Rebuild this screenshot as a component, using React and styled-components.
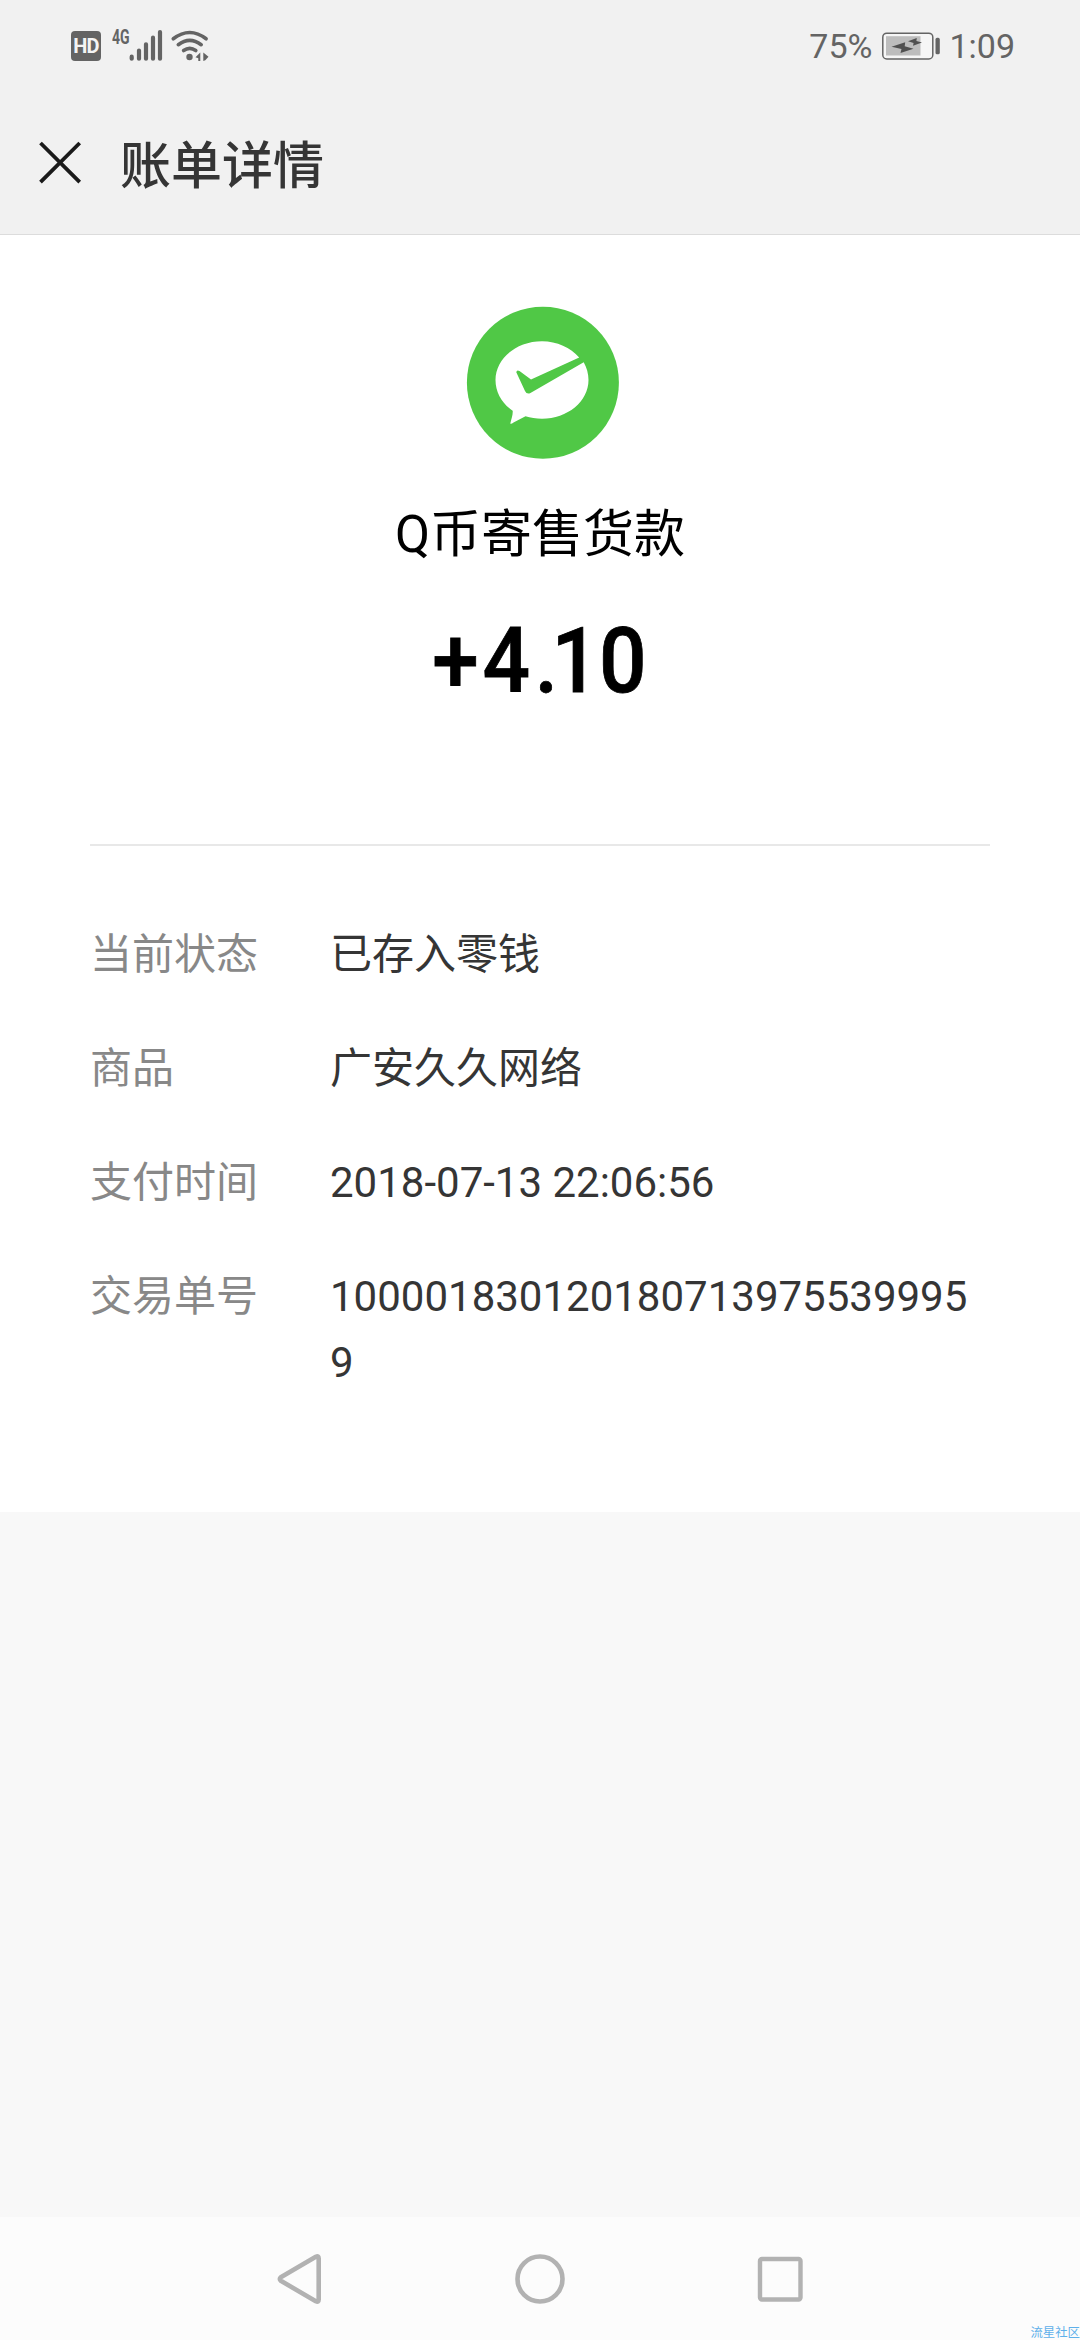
import React from "react";
import styled, { createGlobalStyle } from "styled-components";

const GlobalStyle = createGlobalStyle`
  * { box-sizing: border-box; }
  body {
    margin: 0;
    background: #f8f8f8;
    font-family: Roboto, "Noto Sans CJK SC", sans-serif;
  }
`;

const Screen = styled.div`
  position: relative;
  display: flex;
  flex-direction: column;
  width: 1080px;
  height: 2340px;
  overflow: hidden;
  background: #f8f8f8;
`;

const Header = styled.header`
  flex: none;
  height: 235px;
  background: #f1f1f1;
  border-bottom: 1px solid #dcdcdc;
`;

const StatusBar = styled.div`
  display: flex;
  justify-content: space-between;
  height: 91px;
  padding: 0 65px 0 71px;
  color: #646464;
`;

const StatusGroup = styled.div`
  display: flex;
  align-items: center;
  height: 91px;
`;

const HdBadge = styled.span`
  width: 30px;
  height: 30px;
  border-radius: 4px;
  background: #646464;
  color: #f4f4f4;
  font: 700 20px/30px Roboto, sans-serif;
  letter-spacing: -0.8px;
  text-align: center;
`;

const NetworkLabel = styled.span`
  width: 17px;
  margin: 0 0 17px 11px;
  font: 700 20px/20px Roboto, sans-serif;
  transform: scaleX(0.7);
  transform-origin: left center;
`;

const StatusText = styled.span`
  margin-left: ${(p) => p.$gap || 0}px;
  font-size: 34px;
  line-height: 40px;
  white-space: nowrap;
`;

const Icon = styled.svg`
  display: block;
  flex: none;
  overflow: visible;
  margin-left: ${(p) => p.$gap || 0}px;
`;

const TitleBar = styled.div`
  display: flex;
  align-items: center;
  height: 141px;
  padding-left: 39px;
`;

const Title = styled.h1`
  margin: 0 0 0 39px;
  color: #353535;
  font: 500 51px/72px "Noto Sans CJK SC", sans-serif;
`;

const Bill = styled.main`
  flex: none;
  height: 1277px;
  padding: 71px 90px 0;
  background: #fff;
`;

const Summary = styled.section`
  display: flex;
  flex-direction: column;
  align-items: center;
  height: 540px;
  border-bottom: 2px solid #e8e8e8;
`;

const Merchant = styled.div`
  margin-top: 40px;
  color: #000;
  font-size: 51px;
  line-height: 72px;
`;

const Amount = styled.div`
  margin-top: 40px;
  color: #000;
  font: 500 91px/100px Roboto, sans-serif;
  -webkit-text-stroke: 0.8px #000;
  transform: scaleX(0.92);
`;

const Glyph = styled.span`
  letter-spacing: ${(p) => p.$spacing}px;
`;

const Details = styled.dl`
  display: flex;
  flex-direction: column;
  gap: 48px;
  margin: 76px 0 0;
`;

const DetailRow = styled.div`
  display: grid;
  grid-template-columns: 240px 645px;
  font-size: 42px;
  line-height: 66px;
`;

const Label = styled.dt`
  color: #888;
`;

const Value = styled.dd`
  margin: 0;
  color: #353535;
  overflow-wrap: anywhere;
`;

const NavBar = styled.nav`
  display: flex;
  justify-content: center;
  align-items: center;
  gap: 190px;
  height: 123px;
  margin-top: auto;
  background: #fcfcfc;
`;

const Watermark = styled.span`
  position: absolute;
  right: 0;
  bottom: 0;
  color: #5fb0ea;
  font: 12.4px/14px "Liberation Sans", "Noto Sans CJK SC", sans-serif;
  white-space: nowrap;
`;

const details = [
  ["当前状态", "已存入零钱"],
  ["商品", "广安久久网络"],
  ["支付时间", "2018-07-13 22:06:56"],
  ["交易单号", "1000018301201807139755399959"],
];

const SignalIcon = () => (
  <Icon width="33" height="31" viewBox="128 29.5 33 31" stroke="#646464" strokeWidth="4.2" strokeLinecap="round">
    <path d="M130.7 56.2V58.2M138 50V58.2M145 43.8V58.2M152 37.2V58.2M159 31.5V58.2" />
  </Icon>
);

const WifiIcon = () => (
  <Icon $gap={9} width="38" height="31" viewBox="170 29.5 38 31" fill="none" stroke="#646464" strokeWidth="3.6" strokeLinecap="round">
    <path d="M172.3 38.3Q188.7 25.7 205.1 38.3" />
    <path d="M177.3 44.2Q188.7 35.6 200.2 44.2" />
    <path d="M182.6 50Q188.7 45.6 194.8 50" />
    <circle cx="188.5" cy="56.5" r="3.2" fill="#646464" stroke="none" />
    <path d="M194.5 56.8L199.3 52V60.5H197.3V57.8ZM202.3 52L207.5 56.3L204.3 59.8L202.3 60.5Z" fill="#646464" stroke="none" />
  </Icon>
);

const BatteryIcon = () => (
  <Icon $gap={10} width="58" height="28" viewBox="881 31.5 58 28">
    <rect x="881.8" y="32.7" width="50" height="25.8" rx="4" fill="#f6f6f6" stroke="#646464" strokeWidth="1.5" />
    <rect x="885" y="35.7" width="34.5" height="19.3" fill="#bdbdbd" />
    <rect x="934.5" y="37.3" width="4.3" height="16.5" rx="1.6" fill="#646464" />
    <path d="M890.5 46.2L900.5 48.6L899.5 52.5L912.5 48.2L903.7 45.8L904.2 41.8ZM907 40.8L912.6 42.5L912 45.3L921 42L915.4 40.5L915.8 37.4Z" fill="#505050" />
  </Icon>
);

const CloseIcon = () => (
  <Icon width="42" height="42" viewBox="39 140 42 42" stroke="#1a1a1a" strokeWidth="3.8">
    <path d="M40.5 142L79.7 181.2M79.7 142L40.5 181.2" />
  </Icon>
);

const PayLogo = () => (
  <Icon $gap={5} width="152" height="153" viewBox="466.5 306 152 153">
    <circle cx="542.4" cy="382.7" r="76" fill="#50c846" />
    <path
      d="M541.5 341.2C516 341.2 495 358.5 495 380C495 392.5 501.5 403.5 512.2 410.7C512.5 415 511 418.5 509.8 423.5Q510.5 424.5 513 422.6L525 416.3C530 418 535.5 418.7 541.5 418.7C567 418.7 588 401.5 588 380C588 374 586.3 367.4 583.2 362.2L529.5 393.3Q526 394.4 524.5 391L515.8 372.2Q516.2 369.5 519 371L530.5 379.4L578.7 357.6C570 347.5 556.5 341.2 541.5 341.2Z"
      fill="#fff"
    />
  </Icon>
);

export default function App() {
  return (
    <Screen>
      <GlobalStyle />
      <Header>
        <StatusBar>
          <StatusGroup>
            <HdBadge>HD</HdBadge>
            <NetworkLabel>4G</NetworkLabel>
            <SignalIcon />
            <WifiIcon />
          </StatusGroup>
          <StatusGroup>
            <StatusText>75%</StatusText>
            <BatteryIcon />
            <StatusText $gap={9}>1:09</StatusText>
          </StatusGroup>
        </StatusBar>
        <TitleBar>
          <CloseIcon />
          <Title>账单详情</Title>
        </TitleBar>
      </Header>
      <Bill>
        <Summary>
          <PayLogo />
          <Merchant>Q币寄售货款</Merchant>
          <Amount>
            <Glyph $spacing={4}>+</Glyph>
            <Glyph $spacing={5}>4</Glyph>
            <Glyph $spacing={-7}>.</Glyph>
            10
          </Amount>
        </Summary>
        <Details>
          {details.map(([label, value]) => (
            <DetailRow key={label}>
              <Label>{label}</Label>
              <Value>{value}</Value>
            </DetailRow>
          ))}
        </Details>
      </Bill>
      <NavBar>
        <Icon width="50" height="50" viewBox="275 2254 50 50" fill="none" stroke="#b2b2b2" strokeWidth="4.6" strokeLinejoin="round">
          <path d="M280.8 2277.2L315.8 2256.8Q318.7 2255.5 318.7 2258.5V2299.5Q318.7 2302.5 315.8 2301.2L280.8 2280.8Q278.8 2279 280.8 2277.2Z" />
        </Icon>
        <Icon width="50" height="50" fill="none" stroke="#b2b2b2" strokeWidth="4.6">
          <circle cx="25" cy="25" r="22.5" />
        </Icon>
        <Icon width="50" height="50" fill="none" stroke="#b2b2b2" strokeWidth="4.4">
          <rect x="5" y="5" width="40.5" height="40.5" rx="2" />
        </Icon>
      </NavBar>
      <Watermark>流星社区</Watermark>
    </Screen>
  );
}
